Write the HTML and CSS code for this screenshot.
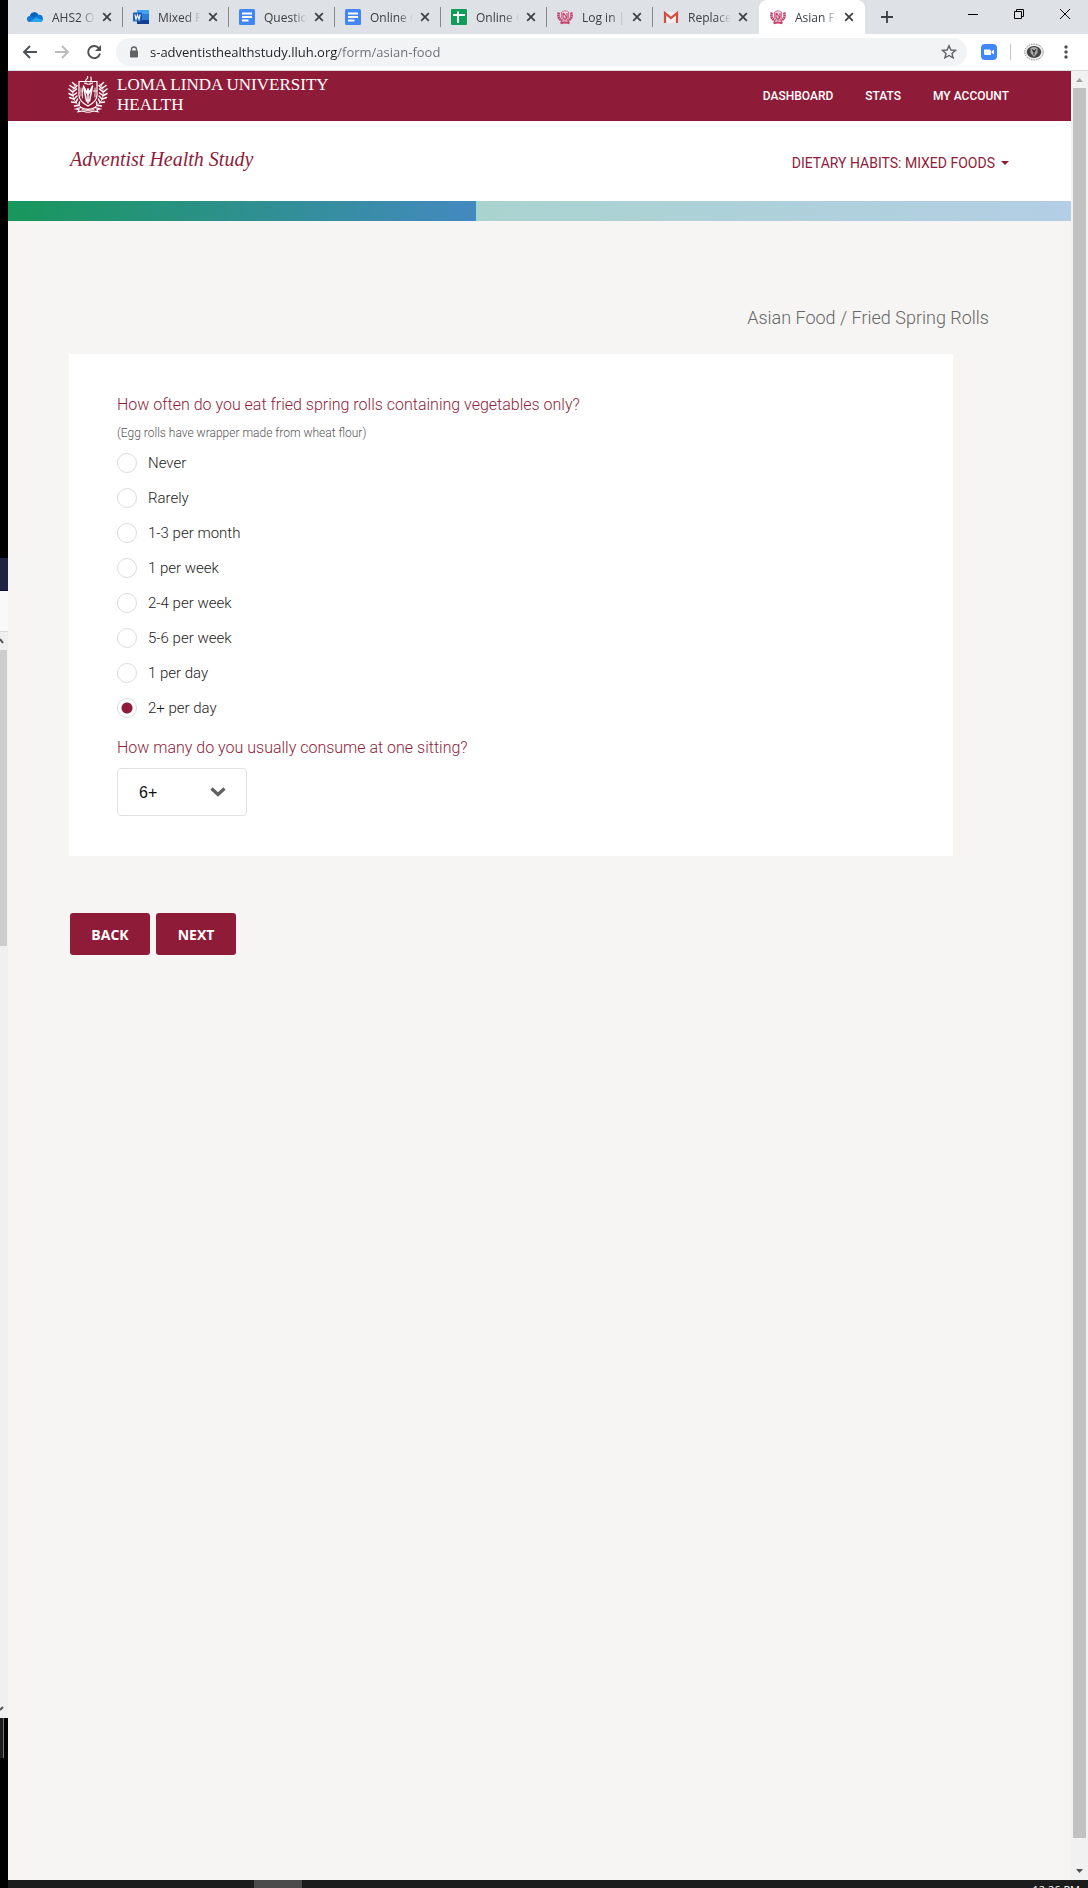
FILE: index.html
```html
<!DOCTYPE html>
<html lang="en">
<head>
<meta charset="utf-8">
<meta name="viewport" content="width=device-width, initial-scale=1">
<title>Asian Food</title>
<link rel="stylesheet" href="styles.css">
</head>
<body>
<svg class="defs" aria-hidden="true">
  <symbol id="i-close" viewBox="0 0 10 10"><path d="M1.2 1.2l7.6 7.6M8.8 1.2L1.2 8.8" fill="none" stroke="currentColor" stroke-width="1.7"/></symbol>
  <symbol id="i-doc" viewBox="0 0 16 16"><rect width="16" height="16" rx="1.5" fill="#4285f4"/><path d="M3 4.5h10M3 8h10M3 11.5h6.500" stroke="#fff" stroke-width="1.8"/></symbol>
  <symbol id="i-crest" viewBox="0 0 16 16"><g fill="none" stroke="#c2416b"><path d="M4.500 3C5.500 2 6.500 2.500 8 1.500 9.500 2.500 10.500 2 11.500 3v5c0 2-2 3.500-3.500 4.200C6.500 11.500 4.500 10 4.500 8z" fill="#f3d3de" stroke-width=".7"/><path d="M6 4v4.500l2 2 2-2V4M6.500 4l3 4.500" stroke-width="1.100"/><path d="M2 3.500c-1.500 4 0 7 3.500 8.500M14 3.500c1.500 4 0 7-3.500 8.500" stroke-width="2.600" stroke-dasharray="1.800 .4"/><path d="M3.500 14.300c3-1.200 6-1.200 9 0" stroke-width="2"/></g></symbol>
  <symbol id="i-emblem" viewBox="0 0 40 38"><g fill="none" stroke="#fff" stroke-linecap="round">
    <path d="M11 5.500h18V19c0 5.500-4 8.500-9 11-5-2.500-9-5.500-9-11z" stroke-width="1.200"/>
    <path d="M18 6c-2-2.500 3-3 1.500-5.500M22 6c2.500-2 .5-3.500 1-5M16.500 7c3 1.800 5 1.800 8 0" stroke-width="1.100"/>
    <path d="M15.500 10l3.500 7 1-4.500 1 4.500 3.500-7M15.500 10l3 15M24.500 10l-3 15M20 13v14" stroke-width="1.500"/>
    <path d="M13 12v8M14.500 12v10M13 15h2" stroke-width=".8"/>
    <path d="M27 12v9M25.200 15h3.600" stroke-width=".9"/>
    <path d="M8 8C2 14 4 26 13 31M32 8c6 6 4 18-5 23" stroke-width=".8"/>
    <path d="M7 9L4.500 6.500M5.500 12L2 9.500M4.500 16L1 13M4.500 19.500L1 17.500M5.500 23L1.500 21.500M7.500 26.500L3.500 26M10.500 29.500L6.500 30M6.500 12.500L9 9.500M5 16L8.500 13M5 19.500l3.500-2.500M6 23l3-3M8 26.500l1.500-3.500M11 29.500l.5-3.500" stroke-width="1.500"/>
    <path d="M33 9l2.500-2.500M34.500 12L38 9.500M35.500 16l3.500-3M35.500 19.500l3.500-2M34.500 23l4-1.500M32.500 26.500l4-.5M29.500 29.500l4 .5M33.500 12.500L31 9.500M35 16l-3.500-3M35 19.500L31.500 17M34 23l-3-3M32 26.500L30.500 23M29 29.500l-.5-3.500" stroke-width="1.500"/>
    <path d="M8 33l5-1.500c4 2.500 10 2.500 14 0l5 1.500-3 .7 1 2-5-.7c-3 1.500-7 1.500-10 0l-5 .7 1-2z" stroke-width="1.200"/>
    <path d="M14 33.500c4 1.500 8 1.500 12 0" stroke-width=".8"/></g></symbol>
</svg>
<div class="desktop">
  <div class="behind" aria-hidden="true">
    <div class="b-black"></div><div class="b-title"></div><div class="b-bar"></div>
    <div class="b-scroll">
      <svg viewBox="0 0 8 8" width="8" height="18"><path d="M0 2l3 4" stroke="#555" stroke-width="2"/></svg>
      <div class="b-thumb"></div><div class="b-space"></div>
      <svg viewBox="0 0 8 8" width="8" height="18"><path d="M0 5l3-3" stroke="#555" stroke-width="2"/></svg>
    </div>
    <div class="b-status"></div>
  </div>
  <div class="window">
    <div class="tabstrip">
      <div class="tab"><svg class="fav" viewBox="0 0 16 16"><path d="M4 13H3A3 3 0 0 1 3 7a4.500 4.500 0 0 1 8.500-1A3.500 3.500 0 0 1 13 13z" fill="#0a78d4"/><path d="M3 7a4.500 4.500 0 0 1 8.500-1c-2 0-3 1-4 2z" fill="#0364b8"/><path d="M2.500 13L9 8.500l6.800 2.500c-.5 1.200-1.500 2-2.800 2z" fill="#28a8ea"/></svg><a class="title" href="#">AHS2 Online</a><button class="close" aria-label="Close tab"><svg><use href="#i-close"/></svg></button></div>
      <div class="tab"><svg class="fav" viewBox="0 0 16 16"><rect x="4" y="1" width="12" height="14" rx="1" fill="#2b7cd3"/><path d="M4 1h12v4H4z" fill="#41a5ee"/><path d="M4 11h12v4H4z" fill="#103f91"/><rect y="3.500" width="9" height="9" rx="1" fill="#185abd"/><path d="M1.800 5.500l1.200 5 1.500-4.500 1.500 4.500 1.200-5" fill="none" stroke="#fff" stroke-width="1.100"/></svg><a class="title" href="#">Mixed Foods</a><button class="close" aria-label="Close tab"><svg><use href="#i-close"/></svg></button></div>
      <div class="tab"><svg class="fav"><use href="#i-doc"/></svg><a class="title" href="#">Questions</a><button class="close" aria-label="Close tab"><svg><use href="#i-close"/></svg></button></div>
      <div class="tab"><svg class="fav"><use href="#i-doc"/></svg><a class="title" href="#">Online Q</a><button class="close" aria-label="Close tab"><svg><use href="#i-close"/></svg></button></div>
      <div class="tab"><svg class="fav" viewBox="0 0 16 16"><rect width="16" height="16" rx="1" fill="#0f9d58"/><path d="M2 6h12M7 2.500V14" stroke="#fff" stroke-width="2"/></svg><a class="title" href="#">Online Q</a><button class="close" aria-label="Close tab"><svg><use href="#i-close"/></svg></button></div>
      <div class="tab"><svg class="fav"><use href="#i-crest"/></svg><a class="title" href="#">Log in | A</a><button class="close" aria-label="Close tab"><svg><use href="#i-close"/></svg></button></div>
      <div class="tab last"><svg class="fav" viewBox="0 0 16 16"><path d="M2 3h12v11H2z" fill="#eee"/><path d="M2 14V4l6 5 6-5v10" fill="none" stroke="#d54b3d" stroke-width="2.200"/></svg><a class="title" href="#">Replacement</a><button class="close" aria-label="Close tab"><svg><use href="#i-close"/></svg></button></div>
      <div class="tab active"><svg class="fav"><use href="#i-crest"/></svg><a class="title" href="#">Asian Food</a><button class="close" aria-label="Close tab"><svg><use href="#i-close"/></svg></button></div>
      <button class="plain newtab" aria-label="New tab"><svg width="12" height="12" viewBox="0 0 12 12"><path d="M6 0v12M0 6h12" stroke="#3c4043" stroke-width="1.800"/></svg></button>
      <div class="winctl">
        <button class="plain" aria-label="Minimize"><svg width="10" height="10" viewBox="0 0 10 10"><path d="M0 5.500h10" stroke="#000"/></svg></button>
        <button class="plain" aria-label="Restore"><svg width="10" height="10" viewBox="0 0 10 10"><path d="M.5 2.500h7v7h-7zM2.500 2.500v-2h7v7h-2" fill="none" stroke="#000"/></svg></button>
        <button class="plain" aria-label="Close"><svg width="10" height="10" viewBox="0 0 10 10"><path d="M0 0l10 10M10 0L0 10" stroke="#000"/></svg></button>
      </div>
    </div>
    <div class="toolbar">
      <div class="navbtns">
        <button class="plain" aria-label="Back"><svg width="16" height="16" viewBox="0 0 16 16"><path d="M15 8H2M8 2L2 8l6 6" fill="none" stroke="#4d5156" stroke-width="1.900"/></svg></button>
        <button class="plain" aria-label="Forward"><svg width="16" height="16" viewBox="0 0 16 16"><path d="M1 8h13M8 2l6 6-6 6" fill="none" stroke="#babcbe" stroke-width="1.900"/></svg></button>
        <button class="plain" aria-label="Reload"><svg width="16" height="16" viewBox="0 0 16 16"><path d="M13 4.500A6 6 0 1 0 14 9.500" fill="none" stroke="#4d5156" stroke-width="1.900"/><path d="M15 1v6H9z" fill="#4d5156"/></svg></button>
      </div>
      <div class="omnibox">
        <svg width="10" height="12" viewBox="0 0 10 12"><path d="M2.500 5V3.500a2.500 2.500 0 0 1 5 0V5" fill="none" stroke="#5f6368" stroke-width="1.300"/><rect x="1" y="4.500" width="8" height="7" rx="1" fill="#5f6368"/></svg>
        <input class="url" type="text" aria-label="Address" value="s-adventisthealthstudy.lluh.org/form/asian-food">
        <button class="plain star" aria-label="Bookmark"><svg width="16" height="16" viewBox="0 0 16 16"><path d="M8 1.800l1.900 4.200 4.600.4-3.500 3 1.100 4.500L8 11.500l-4.100 2.400L5 9.400l-3.500-3L6.100 6z" fill="none" stroke="#5f6368" stroke-width="1.400"/></svg></button>
      </div>
      <div class="exts">
        <button class="plain" aria-label="Zoom"><svg width="16" height="16" viewBox="0 0 16 16"><rect width="16" height="16" rx="4" fill="#4087fc"/><path d="M3 5.500h5.500a1.500 1.500 0 0 1 1.500 1.500v4H4.500A1.500 1.500 0 0 1 3 9.500zM10.500 7.500L13 5.500v5l-2.500-1.800z" fill="#fff"/></svg></button>
        <span class="rule"></span>
        <button class="plain" aria-label="Profile"><svg width="20" height="20" viewBox="0 0 20 20"><ellipse cx="10" cy="10" rx="9.300" ry="8" fill="#eee" stroke="#888" stroke-dasharray="1.500 1"/><ellipse cx="10" cy="10" rx="7.300" ry="6" fill="#444"/><path d="M6.500 6l3.500-1 3.500 1v5L10 15l-3.500-4z" fill="#aaa"/><path d="M8 7l1.500 3L10 8l.5 2L12 7M10 9v4" fill="none" stroke="#222" stroke-width=".9"/></svg></button>
        <button class="plain" aria-label="Menu"><svg width="4" height="14" viewBox="0 0 4 14"><g fill="#4d5156"><circle cx="2" cy="2" r="1.700"/><circle cx="2" cy="7" r="1.700"/><circle cx="2" cy="12" r="1.700"/></g></svg></button>
      </div>
    </div>
    <div class="viewport">
      <div class="page">
        <header class="brandbar">
          <a class="brand" href="#"><svg width="40" height="38"><use href="#i-emblem"/></svg><span>LOMA LINDA UNIVERSITY<br>HEALTH</span></a>
          <nav class="mainnav"><a href="#">DASHBOARD</a><a href="#">STATS</a><a href="#">MY ACCOUNT</a></nav>
        </header>
        <div class="studybar">
          <a class="study" href="#">Adventist Health Study</a>
          <button class="plain section">DIETARY HABITS: MIXED FOODS<span class="caret"></span></button>
        </div>
        <div class="progress" role="progressbar" aria-label="Survey progress" aria-valuenow="44" aria-valuemin="0" aria-valuemax="100"><div class="done" style="width:44%"></div><div class="todo"></div></div>
        <main>
          <h1>Asian Food / Fried Spring Rolls</h1>
          <form>
            <div class="card">
              <fieldset>
                <legend class="question">How often do you eat fried spring rolls containing vegetables only?</legend>
                <p class="hint">(Egg rolls have wrapper made from wheat flour)</p>
                <label><input type="radio" name="often">Never</label>
                <label><input type="radio" name="often">Rarely</label>
                <label><input type="radio" name="often">1-3 per month</label>
                <label><input type="radio" name="often">1 per week</label>
                <label><input type="radio" name="often">2-4 per week</label>
                <label><input type="radio" name="often">5-6 per week</label>
                <label><input type="radio" name="often">1 per day</label>
                <label><input type="radio" name="often" checked>2+ per day</label>
              </fieldset>
              <label class="question second" for="many">How many do you usually consume at one sitting?</label>
              <div class="select"><select id="many"><option>6+</option></select><svg width="16" height="10" viewBox="0 0 16 10"><path d="M1.500 1.500L8 7.500l6.500-6" fill="none" stroke="#606060" stroke-width="3.200"/></svg></div>
            </div>
            <div class="actions"><button type="button">BACK</button><button type="button">NEXT</button></div>
          </form>
        </main>
      </div>
      <div class="scrollbar" aria-hidden="true"><svg width="7" height="17" viewBox="0 0 7 17"><path d="M0 11l3.500-4L7 11z" fill="#a0a0a0"/></svg><div class="thumb"></div><svg width="7" height="17" viewBox="0 0 7 17"><path d="M0 6h7l-3.500 4z" fill="#505050"/></svg></div>
    </div>
    <div class="taskbar"><span class="task"></span><time>12:26 PM</time></div>
  </div>
</div>
</body>
</html>
```
FILE: styles.css
```css
* { box-sizing: border-box; }
body { margin: 0; font-family: Roboto, "Liberation Sans", sans-serif; font-size: 15px; color: #222; }
a { color: inherit; text-decoration: none; }
svg { display: block; flex: none; }
.defs { position: absolute; width: 0; height: 0; }
.plain { border: 0; padding: 0; background: none; font: inherit; color: inherit; }

.desktop { display: flex; min-height: 100vh; background: #000; }
.behind { width: 8px; flex: none; }
.b-black { height: 558px; }
.b-title { height: 33px; background: #1f2240; border-bottom: 1px solid #0c0e2a; }
.b-bar { height: 41px; background: #f9f9f9; border-bottom: 1px solid #dcdcdc; }
.b-scroll { display: flex; flex-direction: column; height: 1086px; background: #f0f0f0; }
.b-thumb { width: 7px; height: 296px; background: #cdcdcd; }
.b-space { flex: 1; }
.b-status { width: 4px; height: 40px; border-right: 1px solid #777; background: #1c1c1c; }

.window { flex: 1; min-width: 0; display: flex; flex-direction: column; }
.tabstrip { display: flex; align-items: center; height: 34px; padding-left: 9px; background: #dee1e6; font-family: "Open Sans", "Noto Sans", sans-serif; font-size: 12px; color: #3c4043; }
.tab { display: flex; align-items: center; flex: 0 1 106px; min-width: 0; height: 20px; padding: 0 10px; border-right: 1px solid #85888c; }
.tab.last { border-right-color: transparent; }
.tab.active { height: 34px; border: 0; border-radius: 8px 8px 0 0; background: #fff; padding: 0 11px; }
.fav { width: 16px; height: 16px; margin-right: 9px; }
.title { flex: 1; min-width: 0; overflow: hidden; white-space: nowrap; mask-image: linear-gradient(90deg, #000 65%, transparent); }
.close { border: 0; padding: 0; margin-left: 7px; background: none; color: #3c4043; }
.close svg { width: 10px; height: 10px; }
.newtab { margin-left: 16px; }
.winctl { display: flex; gap: 36px; margin: 0 18px 6px auto; }

.toolbar { display: flex; align-items: center; height: 37px; padding: 0 20px 1px 14px; border-bottom: 1px solid #dadce0; background: #fff; }
.navbtns { display: flex; gap: 16px; }
.omnibox { flex: 1; display: flex; align-items: center; height: 28px; margin: 0 14px; padding: 0 10px 0 13px; border-radius: 14px; background: #f1f3f4; }
.url { flex: 1; min-width: 0; margin-left: 11px; padding: 0; border: 0; font: 13px/20px "Open Sans", "Noto Sans", sans-serif; color: transparent; background: linear-gradient(90deg, #202124 188px, #6a6e73 188px); background-clip: text; }
.exts { display: flex; align-items: center; gap: 13px; }
.rule { width: 1px; height: 16px; background: #c4c6c9; }
.exts button:last-child { margin-left: 7px; }

.viewport { flex: 1; display: flex; }
.page { flex: 1; min-width: 0; background: #f6f5f3; }
.scrollbar { display: flex; flex-direction: column; align-items: center; width: 17px; background: #f1f1f1; }
.thumb { width: 13px; flex: 1; margin-bottom: 25px; background: #c1c1c1; }

.brandbar { display: flex; align-items: center; justify-content: space-between; height: 50px; padding: 0 62px 0 60px; background: #8e1c39; color: #fff; }
.brand { display: flex; align-items: center; gap: 9px; padding-bottom: 3px; font: 17px/20px "Liberation Serif", serif; white-space: nowrap; }
.mainnav { display: flex; gap: 32px; font-size: 12px; line-height: 20px; font-weight: 500; }
.studybar { display: flex; align-items: center; justify-content: space-between; height: 80px; padding: 0 62px; background: #fff; color: #8e1c39; }
.study { padding-bottom: 4px; font: italic 20px/24px "Liberation Serif", serif; }
.section { display: flex; align-items: center; gap: 6px; padding-top: 4px; font-size: 14px; line-height: 20px; }
.caret { border: 4px solid transparent; border-top-color: #8e1c39; border-bottom: 0; }
.progress { display: flex; height: 20px; }
.done { background: linear-gradient(90deg, #18975c, #4389c0); }
.todo { flex: 1; background: linear-gradient(90deg, #a9d3cf, #b3cee5); }

main { padding: 84px 118px 0 61px; }
h1 { margin: 0 -36px 23px 0; font-size: 18px; line-height: 26px; font-weight: 300; text-align: right; color: #666; }
.card { padding: 40px 48px; background: #fff; }
fieldset { margin: 0; padding: 0; border: 0; min-width: 0; }
.question { display: block; padding: 0; font-size: 16px; line-height: 22px; font-weight: 300; color: #8e1c39; }
.hint { margin: 8px 0 11px; font-size: 12px; line-height: 18px; font-weight: 300; color: #555; }
fieldset label { display: flex; align-items: center; gap: 11px; height: 20px; margin-bottom: 15px; font-weight: 300; }
input[type="radio"] { appearance: none; width: 20px; height: 20px; margin: 0; border: 1px solid #dcdcdc; border-radius: 50%; background: #fff; }
input[type="radio"]:checked { background: radial-gradient(circle, #8e1c39 5px, #fff 6px); }
.second { margin: 4px 0 9px; }
.select { display: grid; align-items: center; width: 130px; }
.select select, .select svg { grid-area: 1 / 1; }
.select select { appearance: none; height: 48px; padding: 0 21px; border: 1px solid #e2e2e2; border-radius: 4px; background: #fff; font: 16px "Liberation Sans", sans-serif; color: #111; }
.select svg { justify-self: end; margin-right: 21px; pointer-events: none; }
.actions { display: flex; gap: 6px; margin: 57px 1px; }
.actions button { min-width: 80px; height: 42px; padding: 0 20px; border: 0; border-radius: 3px; background: #8e1c39; color: #fff; font: bold 14px "Open Sans", sans-serif; }

.taskbar { display: flex; justify-content: space-between; height: 8px; padding: 0 8px 0 246px; overflow: hidden; background: #1c1c1c; color: #fff; font: 11px/20px "Open Sans", sans-serif; }
.task { width: 48px; background: #4b4b4b; }
```
